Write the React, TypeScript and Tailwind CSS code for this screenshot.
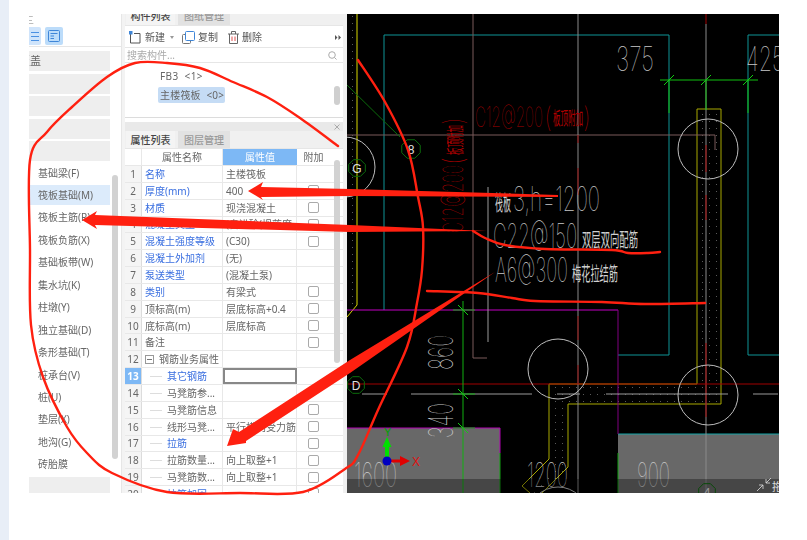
import React from "react";

const FONT = '"Noto Sans", "Noto Sans CJK SC", sans-serif';
const LIST = ["基础梁(F)", "筏板基础(M)", "筏板主筋(R)", "筏板负筋(X)", "基础板带(W)", "集水坑(K)", "柱墩(Y)", "独立基础(D)", "条形基础(T)", "桩承台(V)", "桩(U)", "垫层(X)", "地沟(G)", "砖胎膜"];

type Row = { n: number; name: string; val?: string; blue?: boolean; check?: boolean; child?: boolean; group?: boolean; active?: boolean };
const ROWS: Row[] = [
  { n: 1, name: "名称", val: "主楼筏板", blue: true },
  { n: 2, name: "厚度(mm)", val: "400", blue: true, check: true },
  { n: 3, name: "材质", val: "现浇混凝土", blue: true, check: true },
  { n: 4, name: "混凝土类型", val: "(自进砼(坍落度...", blue: true, check: true },
  { n: 5, name: "混凝土强度等级", val: "(C30)", blue: true, check: true },
  { n: 6, name: "混凝土外加剂", val: "(无)", blue: true },
  { n: 7, name: "泵送类型", val: "(混凝土泵)", blue: true },
  { n: 8, name: "类别", val: "有梁式", blue: true, check: true },
  { n: 9, name: "顶标高(m)", val: "层底标高+0.4", check: true },
  { n: 10, name: "底标高(m)", val: "层底标高", check: true },
  { n: 11, name: "备注", check: true },
  { n: 12, name: "钢筋业务属性", group: true },
  { n: 13, name: "其它钢筋", blue: true, child: true, active: true },
  { n: 14, name: "马凳筋参...", child: true },
  { n: 15, name: "马凳筋信息", child: true, check: true },
  { n: 16, name: "线形马凳...", val: "平行横向受力筋", child: true, check: true },
  { n: 17, name: "拉筋", blue: true, child: true, check: true },
  { n: 18, name: "拉筋数量...", val: "向上取整+1", child: true, check: true },
  { n: 19, name: "马凳筋数...", val: "向上取整+1", child: true, check: true },
  { n: 20, name: "拉筋加固", blue: true, child: true, check: true },
];

function Tab({ label, active }: { label: string; active?: boolean }) {
  return (
    <div className={`flex h-full items-center justify-center pt-[2px] text-[10px] font-medium ${active ? "w-[49px] bg-[#f4f4f4] text-[#444]" : "w-[52px] bg-[#e2e2e2] text-[#999]"}`}>
      {label}
    </div>
  );
}

function LeftPanel() {
  return (
    <div className="relative flex h-full w-[93px] flex-col overflow-hidden border-r border-[#e6e6e6] bg-white text-[10px] text-[#666]">
      <div className="flex h-[12px] shrink-0 items-center overflow-hidden text-[10px] leading-none text-[#aaa]"><span className="ml-[-5px]">三</span></div>
      <div className="flex h-[21px] shrink-0 items-center gap-[4px] border-b border-[#e6e6e6]">
        <div className="flex h-[18px] w-[12px] items-center justify-end rounded-r-[2px] bg-[#cfe4fb]">
          <svg width="10" height="11" viewBox="0 0 10 11"><path d="M0 1.5H8M0 5.5H8M0 9.5H8" stroke="#4a90e2" strokeWidth="1" fill="none" /></svg>
        </div>
        <div className="flex h-[18px] w-[18px] items-center justify-center rounded-[2px] bg-[#bcdcfa]">
          <svg width="12" height="12" viewBox="0 0 12 12"><rect x="0.5" y="0.5" width="11" height="11" rx="1" stroke="#3f86d8" fill="none" /><path d="M2.5 3.5H9.5M2.5 6H6M2.5 8.5H6" stroke="#3f86d8" fill="none" /></svg>
        </div>
      </div>
      <div className="mt-[4px] flex w-[81px] shrink-0 flex-col gap-[2.5px]">
        <div className="flex h-[20px] items-center overflow-hidden bg-[#eeeeee] text-[11px] text-[#666]"><span className="ml-[-10px] whitespace-nowrap">覆盖</span></div>
        <div className="h-[20px] bg-[#eeeeee]" />
        <div className="h-[20px] bg-[#eeeeee]" />
        <div className="h-[20px] bg-[#eeeeee]" />
        <div className="h-[20px] bg-[#eeeeee]" />
      </div>
      <div className="mt-[2px] flex w-[81px] shrink-0 flex-col gap-[2.46px]">
        {LIST.map((t, i) => (
          <div key={t} className={`flex h-[20px] shrink-0 items-center pl-[9px] ${i === 1 ? "bg-[#dcebfb]" : ""}`}>{t}</div>
        ))}
      </div>
      <div className="mt-[2.4px] h-[20px] w-[81px] shrink-0 bg-[#eeeeee]" />
      <div className="absolute left-[83px] top-[161px] h-[284px] w-[6px] rounded-full bg-[#d2d2d2]" />
    </div>
  );
}

function TableRow({ r }: { r: Row }) {
  return (
    <div className="flex h-[16.85px] shrink-0 border-b border-[#e8e8e8]">
      <div className={`flex w-[17px] shrink-0 items-center justify-center border-r border-[#dcdcdc] pt-[1px] ${r.active ? "bg-[#7db8f5] font-bold text-white" : "bg-[#f5f5f5] text-[#666]"}`}>{r.n}</div>
      <div className={`flex w-[81px] shrink-0 items-center border-r border-[#e8e8e8] pt-[1px] ${r.child ? "pl-[8px]" : "pl-[3px]"} ${r.blue ? "text-[#3a6fe0]" : "text-[#666]"}`}>
        {r.child && <span className="mr-[5px] h-px w-[12px] bg-[#ddd]" />}
        {r.group && (
          <span className="mr-[5px] flex h-[9px] w-[9px] items-center justify-center border border-[#999]"><span className="h-px w-[5px] bg-[#777]" /></span>
        )}
        <span className="whitespace-nowrap">{r.name}</span>
      </div>
      <div className={`flex w-[74px] shrink-0 items-center overflow-hidden whitespace-nowrap pl-[3px] pt-[1px] text-[#666] ${r.active ? "border-2 border-[#888] bg-white" : "border-r border-[#e8e8e8]"}`}>{r.val}</div>
      <div className="flex w-[33px] shrink-0 items-center justify-center">
        {r.check && <span className="h-[11px] w-[11px] rounded-[2px] border border-[#aaa] bg-white" />}
      </div>
    </div>
  );
}

function MiddlePanel() {
  return (
    <div className="flex h-full w-[218px] flex-col text-[10px]">
      <div className="flex h-[12px] shrink-0 items-end overflow-hidden border-b border-[#e6e6e6] bg-[#f0f0f0]">
        <div className="flex h-[20px] shrink-0 gap-[3px] pl-[1px]">
          <Tab label="构件列表" active />
          <Tab label="图纸管理" />
        </div>
      </div>
      <div className="flex h-[22px] shrink-0 items-center border-b border-[#e6e6e6] pl-[4px] pr-[1px] pt-[1px] text-[#555]">
        <svg width="12" height="13" viewBox="0 0 12 13" className="mr-[4px]"><path d="M1.5 2.5V12H11V2.5H5" stroke="#555" fill="none" /><rect x="0" y="0" width="3.5" height="3.5" fill="#3f86d8" /></svg>
        <span>新建</span>
        <svg width="4" height="3" viewBox="0 0 4 3" className="ml-[5px] mr-[8px]"><path d="M0 0H4L2 3Z" fill="#999" /></svg>
        <svg width="13" height="13" viewBox="0 0 13 13" className="mr-[3px]"><rect x="0.5" y="3.5" width="8" height="9" rx="1" stroke="#777" fill="#fff" /><rect x="3.5" y="0.5" width="9" height="9" rx="1" stroke="#3f86d8" fill="#fff" /></svg>
        <span>复制</span>
        <svg width="11" height="13" viewBox="0 0 11 13" className="ml-[10px] mr-[3px]"><path d="M1.5 3V12.5H9.5V3M0 3H11M3.5 3V0.5H7.5V3" stroke="#666" fill="none" /><path d="M4 5.5V10M7 5.5V10" stroke="#e05050" /></svg>
        <span>删除</span>
        <div className="ml-auto flex h-[14px] w-[9px] items-center justify-center bg-white">
          <svg width="6" height="5" viewBox="0 0 6 5"><path d="M0 0L2.5 2.5L0 5ZM3.5 0L6 2.5L3.5 5Z" fill="#555" /></svg>
        </div>
      </div>
      <div className="flex h-[15px] shrink-0 items-center justify-between border-b border-[#e6e6e6] pl-[2px] pr-[6px] pt-[1px] text-[#aaa]">
        <span>搜索构件...</span>
        <svg width="9" height="9" viewBox="0 0 9 9"><circle cx="4" cy="4" r="3.3" stroke="#aaa" fill="none" /><path d="M6.5 6.5L8.5 8.5" stroke="#aaa" /></svg>
      </div>
      <div className="relative flex h-[55px] shrink-0 flex-col border-b border-[#dcdcdc] pt-[5px] text-[#666]">
        <div className="flex h-[16px] items-center pl-[35px] tracking-[0.4px]">FB3&nbsp;&nbsp;&lt;1&gt;</div>
        <div className="mt-[3px] ml-[33px] flex h-[16px] w-[67px] items-center rounded-[2px] bg-[#c5dcf5] pl-[2px] tracking-[0.2px]">主楼筏板&nbsp;&nbsp;&lt;0&gt;</div>
        <div className="absolute right-[3px] top-[23px] h-[19px] w-[6px] rounded-full bg-[#cfcfcf]" />
      </div>
      <div className="mt-[4px] flex h-[9px] shrink-0 items-center justify-end bg-[#e9e9e9] pr-[3px]">
        <svg width="6" height="6" viewBox="0 0 6 6"><path d="M0.5 0.5L5.5 5.5M5.5 0.5L0.5 5.5" stroke="#aaa" /></svg>
      </div>
      <div className="flex h-[18px] shrink-0 gap-[3px] border-b border-[#e6e6e6] bg-[#f0f0f0] pl-[1px]">
        <Tab label="属性列表" active />
        <Tab label="图层管理" />
      </div>
      <div className="relative min-h-0 flex-1 overflow-hidden">
        <div className="flex h-[17px] border-b border-[#e8e8e8] pt-0">
          <div className="w-[17px] border-r border-[#e8e8e8]" />
          <div className="flex w-[81px] items-center justify-center border-r border-[#e8e8e8] pt-[1px] text-[#666]">属性名称</div>
          <div className="flex w-[74px] items-center justify-center bg-[#7db8f5] pt-[1px] text-white">属性值</div>
          <div className="flex w-[33px] items-center justify-center pt-[1px] text-[#666]">附加</div>
        </div>
        {ROWS.map((r) => <TableRow key={r.n} r={r} />)}
        <div className="absolute right-[3px] top-[11px] h-[203px] w-[6px] rounded-full bg-[#d2d2d2]" />
      </div>
    </div>
  );
}

function CadText({ x, y, w, size, children, fill = "#c8c8c8", rotate }: { x: number; y: number; w: number; size: number; children: string; fill?: string; rotate?: boolean }) {
  return (
    <text x={x} y={y} fontSize={size} fontFamily="Inter, Roboto, sans-serif" fontWeight={100} fill={fill} textLength={w} lengthAdjust="spacingAndGlyphs" transform={rotate ? `rotate(-90 ${x} ${y})` : undefined}>
      {children}
    </text>
  );
}

function Cn({ x, y, w, size, children, fill = "#d0d0d0", rotate }: { x: number; y: number; w: number; size: number; children: string; fill?: string; rotate?: boolean }) {
  return (
    <text x={x} y={y} fontSize={size} fontFamily='"Noto Sans CJK SC", sans-serif' fill={fill} textLength={w} lengthAdjust="spacingAndGlyphs" transform={rotate ? `rotate(-90 ${x} ${y})` : undefined}>
      {children}
    </text>
  );
}

function Hex({ cx, cy, r, label }: { cx: number; cy: number; r: number; label?: string }) {
  const pts = Array.from({ length: 8 }, (_, i) => {
    const a = (Math.PI / 4) * i + Math.PI / 8;
    return `${cx + r * Math.cos(a)},${cy + r * Math.sin(a)}`;
  }).join(" ");
  return (
    <g>
      <polygon points={pts} fill="none" stroke="#0c6d0c" />
      {label && <text x={cx} y={cy + 4.5} textAnchor="middle" fontSize="12" fontFamily='"Liberation Sans", sans-serif' fill="#e0e0e0">{label}</text>}
    </g>
  );
}

function Canvas() {
  const strip = "M697 109H721V404H568V467L542 493H528L549 472V384H697Z";
  return (
    <div className="h-full w-[432px] shrink-0 overflow-hidden bg-black">
      <svg width="432" height="479" viewBox="347 14 432 479" className="block">
        <defs>
          <pattern id="dots" width="7" height="7" patternUnits="userSpaceOnUse">
            <rect x="2" y="2" width="1" height="1" fill="#5a5a5a" />
          </pattern>
        </defs>
        <rect x="347" y="14" width="10" height="291" fill="url(#dots)" />
        <rect x="347" y="428" width="153" height="65" fill="#686868" />
        <rect x="618" y="434" width="161" height="59" fill="#686868" />
        <path d={strip} fill="url(#dots)" />
        <path d="M384 310V35H669V355H618" fill="none" stroke="#0f9496" strokeWidth="1" />
        <path d="M779 35H748V355H779" fill="none" stroke="#0f9496" strokeWidth="1" />
        <path d="M618 434H779" stroke="#12a3a5" strokeWidth="1" />
        <path d="M357 14V305L347 317" fill="none" stroke="#d8d800" strokeWidth="1" />
        <path d="M697 384V109H721V404H568V467L542 493" fill="none" stroke="#a8a800" strokeWidth="1" />
        <path d="M697 384H549V459L522 486L530 493" fill="none" stroke="#a8a800" strokeWidth="1" />
        <path d="M347 310H618" fill="none" stroke="#c400c4" strokeWidth="1" />
        <path d="M618 310V434" fill="none" stroke="#800080" strokeWidth="1" />
        <path d="M347 428H500V453" fill="none" stroke="#b000b0" strokeWidth="1" />
        <path d="M500 453V493M618 453V493" stroke="#10a010" strokeWidth="1" />
        <path d="M473 14V358H487" fill="none" stroke="#7a5a5a" strokeWidth="1" />
        <path d="M347 135H715V150" fill="none" stroke="#7a5a5a" strokeWidth="1" />
        <path d="M578 14V493" stroke="#8a8a8a" strokeWidth="1" />
        <path d="M578 135V143M578 168V195M578 316V340M578 365V384" stroke="#8a0000" strokeWidth="1" />
        <path d="M706 24V493" stroke="#8a8a8a" strokeWidth="1" />
        <path d="M706 14V24M706 145V172M706 195V220M706 343V384M706 384V417" stroke="#a00000" strokeWidth="1" />
        <path d="M347 384H779" stroke="#a00000" strokeWidth="1" />
        <path d="M362 394H387M411 394H532M557 394H580M606 394H728M753 394H778" stroke="#9a9a9a" strokeWidth="1" />
        <path d="M488 187V342" stroke="#9a9a9a" strokeWidth="1" />
        <path d="M660 80H758M669 80V113M706 80V110M748 80V113" fill="none" stroke="#10c010" strokeWidth="1" />
        <path d="M664 85L674 75M701 85L711 75M743 85L753 75" stroke="#10d010" strokeWidth="1" />
        <path d="M463 301V493M453 310H475M453 394H475M453 428H475" stroke="#10b010" strokeWidth="1" />
        <path d="M458 305L468 315M458 389L468 399M458 423L468 433" stroke="#10d010" strokeWidth="1" />
        <path d="M347 85L400 137" stroke="#0b6b0b" strokeWidth="1" />
        <circle cx="345" cy="167" r="30" fill="none" stroke="#bdbdbd" />
        <circle cx="708" cy="149" r="30" fill="none" stroke="#bdbdbd" />
        <circle cx="558" cy="369" r="30" fill="none" stroke="#bdbdbd" />
        <circle cx="708" cy="395" r="30" fill="none" stroke="#bdbdbd" />
        <circle cx="558" cy="517" r="30" fill="none" stroke="#bdbdbd" />
        <Hex cx={357} cy={168} r={9} label="G" />
        <Hex cx={411} cy={149} r={10} label="8" />
        <Hex cx={356} cy={385} r={9} label="D" />
        <Hex cx={707} cy={492} r={9} label="4" />
        <CadText x={616} y={71} w={38} size={34}>375</CadText>
        <CadText x={746} y={71} w={38} size={34}>425</CadText>
        <CadText x={475} y={127} w={68} size={28} fill="#a80000">C12@200</CadText>
        <CadText x={544} y={127} w={8} size={28} fill="#a80000">(</CadText>
        <Cn x={553} y={125} w={30} size={18} fill="#b00000">板顶附加</Cn>
        <CadText x={583} y={127} w={8} size={28} fill="#a80000">)</CadText>
        <CadText x={463} y={233} w={68} size={28} fill="#a80000" rotate>C12@200</CadText>
        <CadText x={463} y={165} w={8} size={28} fill="#a80000" rotate>(</CadText>
        <Cn x={462} y={155} w={30} size={18} fill="#b00000" rotate>板顶附加</Cn>
        <CadText x={463} y={125} w={8} size={28} fill="#a80000" rotate>)</CadText>
        <Cn x={495} y={210} w={16} size={21}>筏板</Cn>
        <CadText x={513} y={211} w={87} size={34}>3,h=1200</CadText>
        <CadText x={493} y={248} w={84} size={34}>C22@150</CadText>
        <Cn x={582} y={247} w={56} size={19}>双层双向配筋</Cn>
        <CadText x={495} y={282} w={73} size={34}>A6@300</CadText>
        <Cn x={572} y={281} w={46} size={19}>梅花拉结筋</Cn>
        <CadText x={453} y={370} w={35} size={34} rotate>860</CadText>
        <CadText x={453} y={438} w={35} size={34} rotate>340</CadText>
        <CadText x={354} y={487} w={43} size={34}>1600</CadText>
        <CadText x={527} y={487} w={41} size={34}>1200</CadText>
        <CadText x={637} y={487} w={33} size={34}>900</CadText>
        <path d="M387 461V445" stroke="#00e000" strokeWidth="4" />
        <path d="M387 437L391.5 447H382.5Z" fill="#00e000" />
        <path d="M387 461H402" stroke="#e00000" strokeWidth="3" />
        <path d="M410 461L400 456V466Z" fill="#e00000" />
        <circle cx="387" cy="461" r="4.5" fill="#0000c0" />
        <text x="384" y="436" fontSize="11" fontFamily='"Liberation Sans", sans-serif' fill="#00a000">Y</text>
        <text x="412" y="466" fontSize="12" fontFamily='"Liberation Sans", sans-serif' fill="#e01010">X</text>
        <rect x="347" y="479" width="432" height="14" fill="#000" fillOpacity="0.32" />
        <path d="M757 491L763 485M763 485H759M763 485V489M766 483L771 478M766 483H770M766 483V479" stroke="#ddd" strokeWidth="0.8" fill="none" />
        <text x="772" y="491" fontSize="11" fontFamily='"Noto Sans CJK SC", sans-serif' fill="#ddd">拖</text>
      </svg>
    </div>
  );
}

function smooth(p: number[][]) {
  let d = `M${p[0][0]} ${p[0][1]}`;
  for (let i = 0; i < p.length - 1; i++) {
    const a = p[Math.max(i - 1, 0)], b = p[i], c = p[i + 1], e = p[Math.min(i + 2, p.length - 1)];
    d += `C${b[0] + (c[0] - a[0]) / 6} ${b[1] + (c[1] - a[1]) / 6} ${c[0] - (e[0] - b[0]) / 6} ${c[1] - (e[1] - b[1]) / 6} ${c[0]} ${c[1]}`;
  }
  return d;
}

const LOOP = [[338, 146], [300, 118], [267, 97], [233, 82], [200, 68], [167, 63], [135, 63], [107, 77], [72, 107], [47, 132], [30, 160], [30, 250], [31, 325], [43, 377], [67, 427], [87, 453], [112, 473], [167, 492], [240, 493], [303, 492], [345, 469], [358, 455], [378, 410], [407, 347], [417, 303], [422, 270], [423, 227], [418, 197], [408, 150], [385, 102], [358, 60]];
const LINE_A = [[473, 231], [485, 238], [505, 245], [545, 249], [612, 250], [628, 253], [648, 253], [660, 252]];
const LINE_B = [[427, 291], [478, 293], [512, 298], [535, 301], [602, 302], [645, 304], [705, 303]];

function RedInk() {
  return (
    <svg width="807" height="540" viewBox="0 0 807 540" className="pointer-events-none absolute left-0 top-0">
      <g fill="none" stroke="#ff2010" strokeWidth="2.4" strokeLinejoin="round" strokeLinecap="round">
        <path d={smooth(LOOP)} />
        <path d={smooth(LINE_A)} />
        <path d={smooth(LINE_B)} />
      </g>
      <g fill="#ff2010">
        <polygon points="248,191 263,182 261,187 350,189 558,195 558,197 350,196 261,197 263,200" />
        <polygon points="82,220 97,211 95,215 350,225 487,231 350,232 95,225 97,229" />
        <polygon points="227,446 233,429 239,432 350,360 495,272 350,373 246,441 246,443" />
      </g>
    </svg>
  );
}

export default function App() {
  return (
    <div className="relative flex h-[540px] w-[807px] overflow-hidden bg-white" style={{ fontFamily: FONT }}>
      <div className="h-full w-[9px] shrink-0 bg-[#e8eef7]" />
      <div className="ml-[20px] mt-[14px] flex h-[479px] blur-[0.4px]">
        <LeftPanel />
        <div className="w-[3px] bg-[#f3f3f3]" />
        <MiddlePanel />
        <div className="w-[4px] bg-[#f0f0f0]" />
        <Canvas />
      </div>
      <RedInk />
    </div>
  );
}
